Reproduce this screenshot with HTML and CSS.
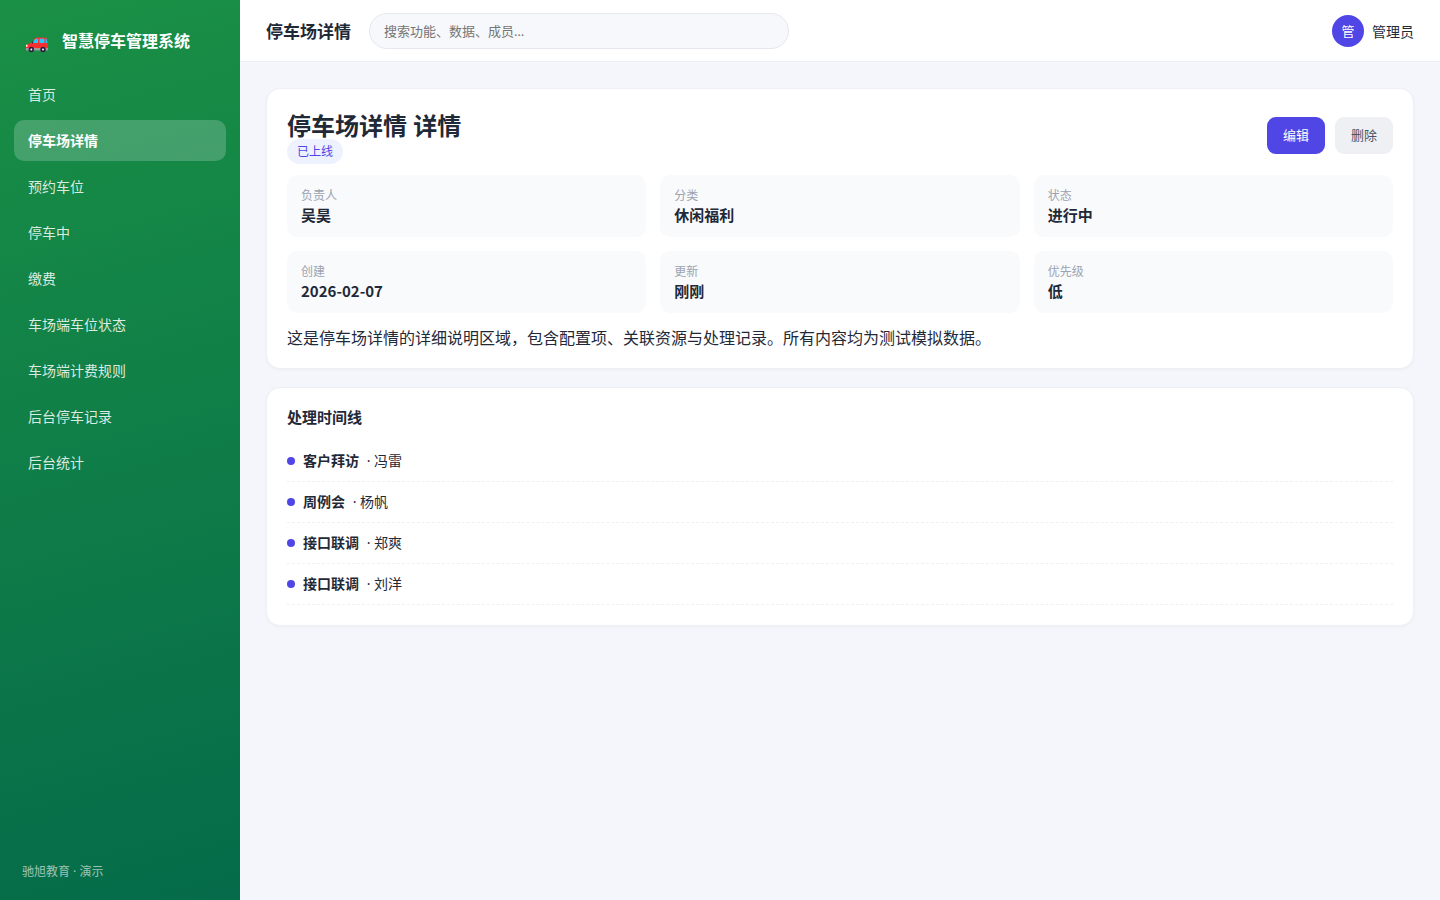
FILE: index.html
```html
<!DOCTYPE html>
<html lang="zh-CN">
<head>
    <meta charset="UTF-8">
    <meta name="viewport" content="width=device-width, initial-scale=1.0">
    <title>停车场详情</title>
    <link rel="stylesheet" href="styles.css">
</head>
<body>
    <aside class="sidebar">
        <div class="logo">
            <svg class="logo-icon" viewBox="0 0 30 30" aria-hidden="true">
                <path d="M4 21l1-2 5-1 2-4q1-1.500 3-1.500h8q2 0 2.300 2l.7 4v5H4z" fill="#f92f2f"/>
                <path d="M11 18l1.700-3.600q.3-.7 1.300-.7h2V18zM17.500 13.700h5V18h-5zM23.700 13.700h.8l.8 4.300h-1.600z" fill="#26c9fc"/>
                <path d="M4 23h22v2.500H4z" fill="#9b9b9b"/>
                <path d="M4 19.800h1.500v2H4z" fill="#fff"/>
                <path d="M10 17.500l1-1.500v2.500h-1z" fill="#321b41"/>
                <circle cx="9.300" cy="24.500" r="2.700" fill="#321b41"/>
                <circle cx="21" cy="24.500" r="2.700" fill="#321b41"/>
                <circle cx="9.300" cy="24.500" r="1" fill="#fff"/>
                <circle cx="21" cy="24.500" r="1" fill="#fff"/>
            </svg>
            <span>智慧停车管理系统</span>
        </div>
        <nav class="menu">
            <a href="#">首页</a>
            <a href="#" class="active">停车场详情</a>
            <a href="#">预约车位</a>
            <a href="#">停车中</a>
            <a href="#">缴费</a>
            <a href="#">车场端车位状态</a>
            <a href="#">车场端计费规则</a>
            <a href="#">后台停车记录</a>
            <a href="#">后台统计</a>
        </nav>
        <div class="sidebar-footer">驰旭教育 · 演示</div>
    </aside>

    <div class="main">
        <header class="topbar">
            <div class="topbar-title">停车场详情</div>
            <input class="search" type="text" placeholder="搜索功能、数据、成员…" aria-label="搜索">
            <div class="user">
                <div class="avatar">管</div>
                <span>管理员</span>
            </div>
        </header>

        <main class="content">
            <section class="card">
                <div class="detail-head">
                    <div>
                        <h1>停车场详情 详情</h1>
                        <div class="badge-row"><span class="badge">已上线</span></div>
                    </div>
                    <div class="actions">
                        <button type="button" class="btn btn-primary">编辑</button>
                        <button type="button" class="btn">删除</button>
                    </div>
                </div>
                <dl class="info-grid">
                    <div class="info-item"><dt>负责人</dt><dd>吴昊</dd></div>
                    <div class="info-item"><dt>分类</dt><dd>休闲福利</dd></div>
                    <div class="info-item"><dt>状态</dt><dd>进行中</dd></div>
                    <div class="info-item"><dt>创建</dt><dd>2026-02-07</dd></div>
                    <div class="info-item"><dt>更新</dt><dd>刚刚</dd></div>
                    <div class="info-item"><dt>优先级</dt><dd>低</dd></div>
                </dl>
                <p class="desc">这是停车场详情的详细说明区域，包含配置项、关联资源与处理记录。所有内容均为测试模拟数据。</p>
            </section>

            <section class="card">
                <h2>处理时间线</h2>
                <ul class="timeline">
                    <li><span class="dot"></span><div><b>客户拜访</b> · 冯雷</div></li>
                    <li><span class="dot"></span><div><b>周例会</b> · 杨帆</div></li>
                    <li><span class="dot"></span><div><b>接口联调</b> · 郑爽</div></li>
                    <li><span class="dot"></span><div><b>接口联调</b> · 刘洋</div></li>
                </ul>
            </section>
        </main>
    </div>
</body>
</html>
```

FILE: styles.css
```css
* {
    box-sizing: border-box;
    margin: 0;
    padding: 0;
}

body {
    display: flex;
    min-height: 100vh;
    font-family: "Noto Sans", "Noto Sans CJK SC", sans-serif;
    font-size: 14px;
    color: #1f2937;
    background: #f5f6fb;
}

/* Sidebar */
.sidebar {
    display: flex;
    flex-direction: column;
    flex-shrink: 0;
    width: 240px;
    padding: 20px 14px;
    background: linear-gradient(165deg, #1a9045, #056b4a);
    color: #fff;
}

.logo {
    display: flex;
    align-items: center;
    gap: 10px;
    height: 40px;
    padding: 0 8px;
    margin-bottom: 14px;
    font-size: 16px;
    font-weight: 700;
}

.logo-icon {
    width: 30px;
    height: 30px;
}

.menu {
    display: flex;
    flex-direction: column;
    gap: 5px;
}

.menu a {
    padding: 10px 14px;
    border-radius: 10px;
    line-height: 21px;
    color: rgba(255, 255, 255, 0.85);
    text-decoration: none;
}

.menu a:hover {
    background: rgba(255, 255, 255, 0.1);
}

.menu a.active {
    background: rgba(255, 255, 255, 0.2);
    color: #fff;
    font-weight: 700;
}

.sidebar-footer {
    margin-top: auto;
    padding: 0 8px;
    font-size: 12px;
    line-height: 17px;
    color: rgba(255, 255, 255, 0.6);
}

/* Topbar */
.main {
    flex: 1;
    min-width: 0;
}

.topbar {
    display: flex;
    align-items: center;
    gap: 18px;
    height: 62px;
    padding: 0 26px;
    background: #fff;
    border-bottom: 1px solid #eceef3;
}

.topbar-title {
    font-size: 17px;
    font-weight: 700;
}

.search {
    width: 420px;
    height: 36px;
    padding: 0 14px;
    border: 1px solid #e5e7ef;
    border-radius: 18px;
    background: #f7f8fc;
    font-family: inherit;
    font-size: 13px;
    outline: none;
}

.search::placeholder {
    color: #757575;
}

.user {
    display: flex;
    align-items: center;
    gap: 8px;
    margin-left: auto;
}

.avatar {
    display: flex;
    align-items: center;
    justify-content: center;
    width: 32px;
    height: 32px;
    border-radius: 50%;
    background: #4f46e5;
    color: #fff;
    font-size: 13px;
}

/* Content */
.content {
    display: flex;
    flex-direction: column;
    gap: 18px;
    padding: 26px;
}

.card {
    padding: 20px;
    border: 1px solid #eef0f5;
    border-radius: 14px;
    background: #fff;
    box-shadow: 0 1px 3px rgba(15, 23, 42, 0.04);
}

.detail-head {
    display: flex;
    align-items: center;
    justify-content: space-between;
    margin-bottom: 13px;
}

h1 {
    font-size: 24px;
    line-height: 33px;
}

.badge-row {
    font-size: 12px;
    line-height: 20px;
}

.badge {
    padding: 4px 10px;
    border-radius: 999px;
    background: #eef2ff;
    color: #4f46e5;
}

.actions {
    display: flex;
    gap: 10px;
}

.btn {
    padding: 9px 16px;
    border: none;
    border-radius: 9px;
    background: #eef0f4;
    color: #475569;
    font-family: inherit;
    font-size: 13px;
    line-height: 19px;
    cursor: pointer;
}

.btn-primary {
    background: #4f46e5;
    color: #fff;
}

.info-grid {
    display: grid;
    grid-template-columns: repeat(3, 1fr);
    gap: 14px;
    margin-bottom: 16px;
}

.info-item {
    padding: 12px 14px;
    border-radius: 10px;
    background: #f9fafc;
}

.info-item dt {
    font-size: 12px;
    line-height: 18px;
    color: #9ca3af;
}

.info-item dd {
    font-family: "Noto Sans CJK SC", sans-serif;
    font-size: 15px;
    font-weight: 700;
    line-height: 20px;
}

.desc {
    font-size: 16px;
    line-height: 19px;
}

h2 {
    margin-bottom: 15px;
    font-size: 15px;
    line-height: 18px;
}

.timeline {
    list-style: none;
}

.timeline li {
    display: flex;
    align-items: center;
    gap: 8px;
    padding: 10px 0;
    border-bottom: 1px dashed #eef0f3;
    line-height: 20px;
}

.timeline b {
    margin-right: 4px;
}

.dot {
    width: 8px;
    height: 8px;
    border-radius: 50%;
    background: #4f46e5;
}
```
